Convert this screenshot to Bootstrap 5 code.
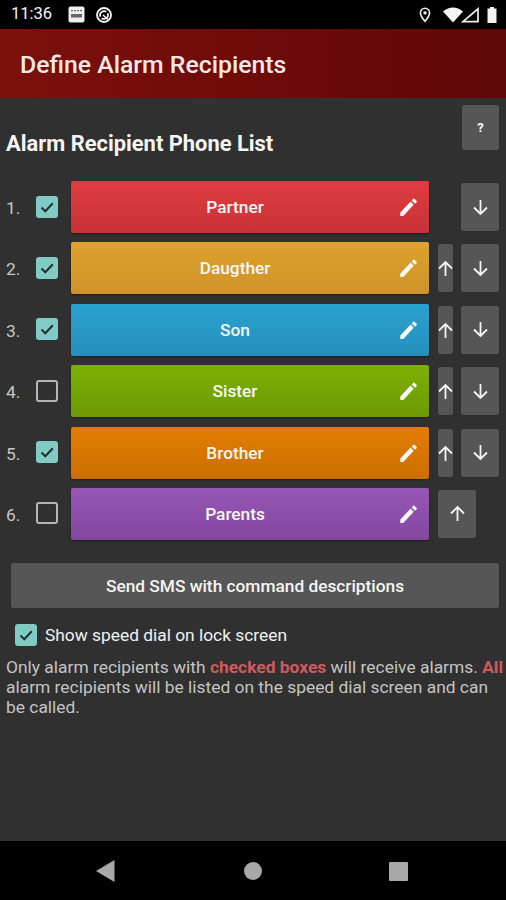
<!DOCTYPE html>
<html lang="en"><head><meta charset="utf-8">
<link href="https://cdn.jsdelivr.net/npm/bootstrap@5.3.0/dist/css/bootstrap.min.css" rel="stylesheet">
<style>
html,body{margin:0;background:#303030;}
body{width:506px;height:900px;overflow:hidden;font-family:Roboto,"Liberation Sans",sans-serif;color:#fff;}
.shell{width:506px;height:900px;}
.statusbar{height:29px;background:#000;padding:0 9px 0 11px;flex:none;}
.clock{font-size:16.5px;color:#f4f4f4;width:57px;}
.sos{margin-right:10px;}
.appbar{height:69px;flex:none;background:linear-gradient(90deg,#7c100c,#5f0707);padding:2px 0 0 20px;font-size:24.8px;font-weight:500;color:#f3e8e6;}
.content{flex:1 1 auto;background:#303030;position:relative;min-height:0;}
.head-row{height:83px;padding:7px 7px 0 6px;}
.list-title{font-size:21.9px;font-weight:700;color:#f5f5f5;margin-top:25px;line-height:28px;}
.helpbtn{width:37px;height:45px;}
.gbtn{background:#565656;border-radius:2px;color:#fff;font-weight:700;font-size:13px;box-shadow:0 0 1px rgba(0,0,0,.4);border:0;padding:0;}
.recipients{gap:9.4px;}
.rrow{height:52px;padding-left:6px;}
.num{width:30px;font-size:17.4px;color:#c6c6c6;padding-top:2px;}
.tick{width:22px;height:22px;border-radius:3px;flex:none;}
.tick.on{background:#80cbc4;}
.tick.off{border:2px solid #b5b5b5;}
.tick svg{display:block;width:100%;height:100%;}
.cell-tick{width:35px;margin-top:-1px;}
.rbtn{width:358px;height:52px;flex:none;border-radius:2px;font-size:17.3px;font-weight:500;color:#f6f6f6;padding:2px 30px 0 0;border:0;position:relative;box-shadow:0 1px 2px rgba(0,0,0,.45);}
.c-red{background:linear-gradient(#e03c40,#c63236);}
.c-yel{background:linear-gradient(#dda32b,#cf9229);}
.c-blu{background:linear-gradient(#2aa1d0,#2590bc);}
.c-grn{background:linear-gradient(#7db003,#6c9a02);}
.c-org{background:linear-gradient(#e27d00,#cc6e00);}
.c-pur{background:linear-gradient(#9856b6,#83479f);}
.pen{position:absolute;right:12px;top:17px;width:17px;height:18px;}
.moves{margin-left:9px;width:61px;height:48px;}
.up-slim{width:15px;height:48px;position:relative;overflow:visible;}
.down-wide{width:38px;height:48px;margin-left:auto;}
.up-wide{width:38px;height:48px;}
.up-slim svg{position:absolute;left:-1px;top:16px;}
.arr{width:17px;height:17px;}
.sendbtn{display:block;margin:23px 7px 0 11px;width:488px;height:45px;font-size:17.3px;font-weight:500;color:#f5f5f5;padding-top:4px;}
.speed{margin:16px 0 0 15px;gap:8px;font-size:17.35px;color:#f0f0f0;height:23px;}
.note{margin:10px 0 0 6px;font-size:17.4px;line-height:20px;color:#c4c4c4;width:500px;white-space:nowrap;}
.note b{color:#cf5a5c;font-weight:700;}
.navbar-bottom{height:59px;flex:none;background:#000;position:relative;}
.navbar-bottom svg{position:absolute;}
</style></head>
<body>
<div class="shell d-flex flex-column">
  <div class="statusbar d-flex align-items-center">
    <span class="clock">11:36</span>
    <svg width="17" height="17" viewBox="0 0 17 17" class="sos"><rect x="0.5" y="0.5" width="16" height="16" rx="2" fill="#efefef"/><g fill="#666"><rect x="3" y="4" width="2" height="1.2"/><rect x="6" y="4" width="2" height="1.2"/><rect x="9" y="4" width="2" height="1.2"/><rect x="12" y="4" width="2" height="1.2"/><rect x="3" y="8" width="11" height="3.5"/></g></svg>
    <svg width="18" height="18" viewBox="0 0 18 18"><circle cx="9" cy="9" r="7" fill="none" stroke="#f2f2f2" stroke-width="1.900"/><path d="M5.300 10.800a4.100 4.100 0 0 1 6-5" fill="none" stroke="#f2f2f2" stroke-width="1.700"/><path d="M12.700 7.200a4.100 4.100 0 0 1-6 5" fill="none" stroke="#f2f2f2" stroke-width="1.700"/><path d="M8 9 13.500 14" stroke="#f2f2f2" stroke-width="1.500"/></svg>
    <span class="ms-auto d-flex align-items-center">
      <svg width="12" height="16" viewBox="0 0 12 16" style="margin-right:12px"><path fill-rule="evenodd" fill="#efefef" d="M6 .5A5.400 5.400 0 0 0 .6 5.900C.6 9.600 6 15.500 6 15.500s5.400-5.900 5.400-9.600A5.400 5.400 0 0 0 6 .5zm0 1.600a3.800 3.800 0 0 1 3.800 3.800c0 2-2.300 5.100-3.800 7-1.500-1.900-3.800-5-3.800-7A3.800 3.800 0 0 1 6 2.100z"/><circle cx="6" cy="5.900" r="1.700" fill="#efefef"/></svg>
      <svg width="37" height="16" viewBox="0 0 37 16" style="margin-right:7px"><path fill="#f5f5f5" d="M0 4.500C3 1.800 6.800.5 10 .5s7 1.300 10 4l-10 11z"/><path fill="none" stroke="#f0f0f0" stroke-width="1.700" d="M20 14.700 35 1.800v12.900z"/></svg>
      <svg width="10" height="16" viewBox="0 0 10 16"><path fill="#f2f2f2" d="M3 0h4v1.500h2.500V16H.5V1.500H3z"/></svg>
    </span>
  </div>
  <div class="appbar d-flex align-items-center">Define Alarm Recipients</div>
  <div class="content">
    <div class="head-row d-flex justify-content-between align-items-start">
      <div class="list-title">Alarm Recipient Phone List</div>
      <button class="gbtn helpbtn" type="button">?</button>
    </div>
    <div class="recipients d-flex flex-column" id="list"></div>
    <button class="gbtn sendbtn" type="button">Send SMS with command descriptions</button>
    <div class="speed d-flex align-items-center">
      <span class="tick on"><svg viewBox="0 0 22 22"><path d="M5.500 11.500l3.800 3.800 7.500-8" fill="none" stroke="#22302f" stroke-width="2"/></svg></span>
      <span>Show speed dial on lock screen</span>
    </div>
    <div class="note">Only alarm recipients with <b>checked boxes</b> will receive alarms. <b>All</b><br>alarm recipients will be listed on the speed dial screen and can<br>be called.</div>
  </div>
  <div class="navbar-bottom">
    <svg style="left:96px;top:19px" width="19" height="22" viewBox="0 0 19 22"><path fill="#a8a8a8" d="M0 11 18.500 0v22z"/></svg>
    <svg style="left:244px;top:21px" width="18" height="18" viewBox="0 0 18 18"><circle cx="9" cy="9" r="9" fill="#a8a8a8"/></svg>
    <svg style="left:389px;top:21px" width="19" height="19" viewBox="0 0 19 19"><rect width="19" height="19" rx="1" fill="#a8a8a8"/></svg>
  </div>
</div>
<script>
var pen='<svg class="pen" viewBox="0 0 17 18"><path fill="#f6f6f6" d="M.3 18v-3.400L10.600 3.600l3.100 3.200L3.300 18zM11.700 2.400 13 1a1.200 1.200 0 0 1 1.800 0l1.600 1.700a1.200 1.200 0 0 1 0 1.800L15 5.700z"/></svg>';
function arr(d,c){var p=d=='u'?'M8.500 16V2M2 8.500 8.500 2 15 8.500':'M8.500 1v14M2 8.500 8.500 15 15 8.500';return '<svg class="arr" viewBox="0 0 17 17"><path d="'+p+'" fill="none" stroke="#f5f5f5" stroke-width="1.800"/></svg>';}
var data=[['Partner','c-red',1,'d'],['Daugther','c-yel',1,'ud'],['Son','c-blu',1,'ud'],['Sister','c-grn',0,'ud'],['Brother','c-org',1,'ud'],['Parents','c-pur',0,'u']];
var h='';
data.forEach(function(r,i){
 var m='';
 if(r[3]=='ud')m='<span class="gbtn up-slim d-block">'+arr('u')+'</span><span class="gbtn down-wide d-flex align-items-center justify-content-center">'+arr('d')+'</span>';
 if(r[3]=='d')m='<span class="gbtn down-wide d-flex align-items-center justify-content-center">'+arr('d')+'</span>';
 if(r[3]=='u')m='<span class="gbtn up-wide d-flex align-items-center justify-content-center">'+arr('u')+'</span>';
 var t=r[2]?'<span class="tick on d-block"><svg viewBox="0 0 22 22"><path d="M5.500 11.500l3.800 3.800 7.500-8" fill="none" stroke="#22302f" stroke-width="2"/></svg></span>':'<span class="tick off d-block"></span>';
 h+='<div class="rrow d-flex align-items-center"><span class="num">'+(i+1)+'.</span><span class="cell-tick">'+t+'</span><button type="button" class="rbtn '+r[1]+'">'+r[0]+pen+'</button><span class="moves d-flex align-items-center">'+m+'</span></div>';
});
document.getElementById('list').innerHTML=h;
</script>
<script src="https://cdn.jsdelivr.net/npm/bootstrap@5.3.0/dist/js/bootstrap.bundle.min.js"></script>
</body></html>
